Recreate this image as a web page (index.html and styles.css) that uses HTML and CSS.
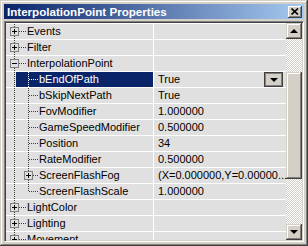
FILE: index.html
```html
<!DOCTYPE html>
<html>
<head>
  <title>InterpolationPoint Properties</title>
  <link rel="stylesheet" href="styles.css">
</head>
<body>
  <div class="Window">
    <div class="TitleBar">
      <span class="Title">InterpolationPoint Properties</span>
      <span class="CloseButton">
        <svg width="8" height="7" viewBox="0 0 8 7"><path d="M0.5 0.5L7 6.5M7 0.5L0.5 6.5"/></svg>
      </span>
    </div>

    <div class="Grid">
      <div class="Rows">
        <div class="Row">
          <div class="Name"><svg class="Tree" width="21" height="15"><path class="Dot" d="M8.5 0V15M13 7.5H21"/><rect class="Box" x="4.5" y="3.5" width="8" height="8"/><path class="Sign" d="M6 7.5H11M8.5 5V10"/></svg>Events</div>
          <div class="Value"></div>
        </div>
        <div class="Row">
          <div class="Name"><svg class="Tree" width="21" height="15"><path class="Dot" d="M8.5 0V15M13 7.5H21"/><rect class="Box" x="4.5" y="3.5" width="8" height="8"/><path class="Sign" d="M6 7.5H11M8.5 5V10"/></svg>Filter</div>
          <div class="Value"></div>
        </div>
        <div class="Row">
          <div class="Name"><svg class="Tree" width="21" height="15"><path class="Dot" d="M8.5 0V15M13 7.5H21"/><rect class="Box" x="4.5" y="3.5" width="8" height="8"/><path class="Sign" d="M6 7.5H11"/></svg>InterpolationPoint</div>
          <div class="Value"></div>
        </div>
        <div class="Row Selected">
          <div class="Name"><svg class="Tree" width="33" height="15"><path class="Dot" d="M8.5 0V15"/><path class="Dot Child" d="M22.5 0V15M23 7.5H33"/></svg>bEndOfPath</div>
          <div class="Value">True<span class="DropButton"></span></div>
        </div>
        <div class="Row">
          <div class="Name"><svg class="Tree" width="33" height="15"><path class="Dot" d="M8.5 0V15"/><path class="Dot Child" d="M22.5 0V15M23 7.5H33"/></svg>bSkipNextPath</div>
          <div class="Value">True</div>
        </div>
        <div class="Row">
          <div class="Name"><svg class="Tree" width="33" height="15"><path class="Dot" d="M8.5 0V15"/><path class="Dot Child" d="M22.5 0V15M23 7.5H33"/></svg>FovModifier</div>
          <div class="Value">1.000000</div>
        </div>
        <div class="Row">
          <div class="Name"><svg class="Tree" width="33" height="15"><path class="Dot" d="M8.5 0V15"/><path class="Dot Child" d="M22.5 0V15M23 7.5H33"/></svg>GameSpeedModifier</div>
          <div class="Value">0.500000</div>
        </div>
        <div class="Row">
          <div class="Name"><svg class="Tree" width="33" height="15"><path class="Dot" d="M8.5 0V15"/><path class="Dot Child" d="M22.5 0V15M23 7.5H33"/></svg>Position</div>
          <div class="Value">34</div>
        </div>
        <div class="Row">
          <div class="Name"><svg class="Tree" width="33" height="15"><path class="Dot" d="M8.5 0V15"/><path class="Dot Child" d="M22.5 0V15M23 7.5H33"/></svg>RateModifier</div>
          <div class="Value">0.500000</div>
        </div>
        <div class="Row">
          <div class="Name"><svg class="Tree" width="33" height="15"><path class="Dot" d="M8.5 0V15"/><path class="Dot Child" d="M22.5 0V15M27 7.5H33"/><rect class="Box" x="18.5" y="3.5" width="8" height="8"/><path class="Sign" d="M20 7.5H25M22.5 5V10"/></svg>ScreenFlashFog</div>
          <div class="Value">(X=0.000000,Y=0.00000...</div>
        </div>
        <div class="Row">
          <div class="Name"><svg class="Tree" width="33" height="15"><path class="Dot" d="M8.5 0V15"/><path class="Dot Child" d="M22.5 0V8M23 7.5H33"/></svg>ScreenFlashScale</div>
          <div class="Value">1.000000</div>
        </div>
        <div class="Row">
          <div class="Name"><svg class="Tree" width="21" height="15"><path class="Dot" d="M8.5 0V15M13 7.5H21"/><rect class="Box" x="4.5" y="3.5" width="8" height="8"/><path class="Sign" d="M6 7.5H11M8.5 5V10"/></svg>LightColor</div>
          <div class="Value"></div>
        </div>
        <div class="Row">
          <div class="Name"><svg class="Tree" width="21" height="15"><path class="Dot" d="M8.5 0V15M13 7.5H21"/><rect class="Box" x="4.5" y="3.5" width="8" height="8"/><path class="Sign" d="M6 7.5H11M8.5 5V10"/></svg>Lighting</div>
          <div class="Value"></div>
        </div>
        <div class="Row">
          <div class="Name"><svg class="Tree" width="21" height="15"><path class="Dot" d="M8.5 0V15M13 7.5H21"/><rect class="Box" x="4.5" y="3.5" width="8" height="8"/><path class="Sign" d="M6 7.5H11M8.5 5V10"/></svg>Movement</div>
          <div class="Value"></div>
        </div>
      </div>

      <div class="ScrollBar">
        <span class="ScrollButton Up"></span>
        <span class="Track TrackTop"></span>
        <span class="Thumb"></span>
        <span class="Track"></span>
        <span class="ScrollButton Down"></span>
      </div>
    </div>
  </div>
</body>
</html>
```

FILE: styles.css
```css
*
{
  margin: 0;
  padding: 0;
  box-sizing: border-box;
}

body
{
  background: #d4d0c8;
  font-family: 'Liberation Sans', Arial, sans-serif;
  font-size: 11px;
  color: #000;
}

/* Win2000 style window frame */
.Window
{
  width: 308px;
  height: 246px;
  padding: 4px;
  display: flex;
  flex-direction: column;
  background: #d4d0c8;
  box-shadow: inset -1px -1px #404040, inset 1px 1px #d4d0c8,
              inset -2px -2px #808080, inset 2px 2px #ffffff;
}

.TitleBar
{
  height: 15px;
  display: flex;
  align-items: center;
  justify-content: space-between;
  background: linear-gradient(to right, #0a246a, #a6caf0);
}

.Title
{
  padding-left: 3px;
  color: #ffffff;
  font-size: 11.6px;
  font-weight: bold;
  line-height: 15px;
}

.CloseButton
{
  width: 14px;
  height: 12px;
  margin-right: 2px;
  display: flex;
  align-items: center;
  justify-content: center;
  background: #d4d0c8;
  box-shadow: inset -1px -1px #404040, inset 1px 1px #ffffff,
              inset -2px -2px #808080;
}

.CloseButton path
{
  stroke: #000;
  stroke-width: 1.7;
  fill: none;
}

/* Sunken property grid */
.Grid
{
  margin-top: 2px;
  height: 221px;
  display: flex;
  border: 1px solid;
  border-color: #808080 #ffffff #ffffff #808080;
  box-shadow: inset 1px 1px #404040, inset -1px -1px #d4d0c8;
  padding: 1px;
}

.Rows
{
  flex: 1;
  overflow: hidden;
  background: #e0e0e0;
  border-top: 1px solid #ffffff;
}

.Row
{
  height: 16px;
  display: flex;
  border-bottom: 1px solid #ffffff;
  line-height: 15px;
}

.Name
{
  width: 148px;
  display: flex;
  align-items: center;
  white-space: nowrap;
  border-right: 1px solid #ffffff;
}

.Value
{
  flex: 1;
  display: flex;
  align-items: center;
  padding-left: 4px;
  white-space: nowrap;
  overflow: hidden;
}

.Tree
{
  flex-shrink: 0;
  shape-rendering: crispEdges;
}

.Dot
{
  fill: none;
  stroke: #404040;
  stroke-dasharray: 1 1;
}

.Box
{
  fill: #e0e0e0;
  stroke: #808080;
}

.Sign
{
  stroke: #000;
  fill: none;
}

.Selected .Name
{
  color: #ffffff;
  background: linear-gradient(to right, transparent 10px, #0a246a 10px);
}

.Selected .Child
{
  stroke: #ffffff;
}

.DropButton
{
  width: 19px;
  height: 15px;
  margin-left: auto;
  margin-right: 3px;
  display: flex;
  align-items: center;
  justify-content: center;
  background: #d4d0c8;
  border: 1px solid #404040;
  box-shadow: inset 1px 1px #808080, inset -1px -1px #808080;
}

.DropButton::after
{
  content: "";
  border-left: 4px solid transparent;
  border-right: 4px solid transparent;
  border-top: 4px solid #000;
}

/* Scroll bar */
.ScrollBar
{
  width: 16px;
  display: flex;
  flex-direction: column;
}

.ScrollButton
{
  height: 16px;
  display: flex;
  align-items: center;
  justify-content: center;
  background: #d4d0c8;
  box-shadow: inset -1px -1px #404040, inset 1px 1px #d4d0c8,
              inset -2px -2px #808080, inset 2px 2px #ffffff;
}

.Up::after
{
  content: "";
  border-left: 4px solid transparent;
  border-right: 4px solid transparent;
  border-bottom: 4px solid #000;
}

.Down::after
{
  content: "";
  border-left: 4px solid transparent;
  border-right: 4px solid transparent;
  border-top: 4px solid #000;
}

.Track
{
  flex: 1;
  background: repeating-conic-gradient(#ffffff 0 25%, #d4d0c8 0 50%) 0 0 / 2px 2px;
}

.TrackTop
{
  flex: 0 0 33px;
}

.Thumb
{
  height: 107px;
  background: #d4d0c8;
  box-shadow: inset -1px -1px #404040, inset 1px 1px #d4d0c8,
              inset -2px -2px #808080, inset 2px 2px #ffffff;
}
```
